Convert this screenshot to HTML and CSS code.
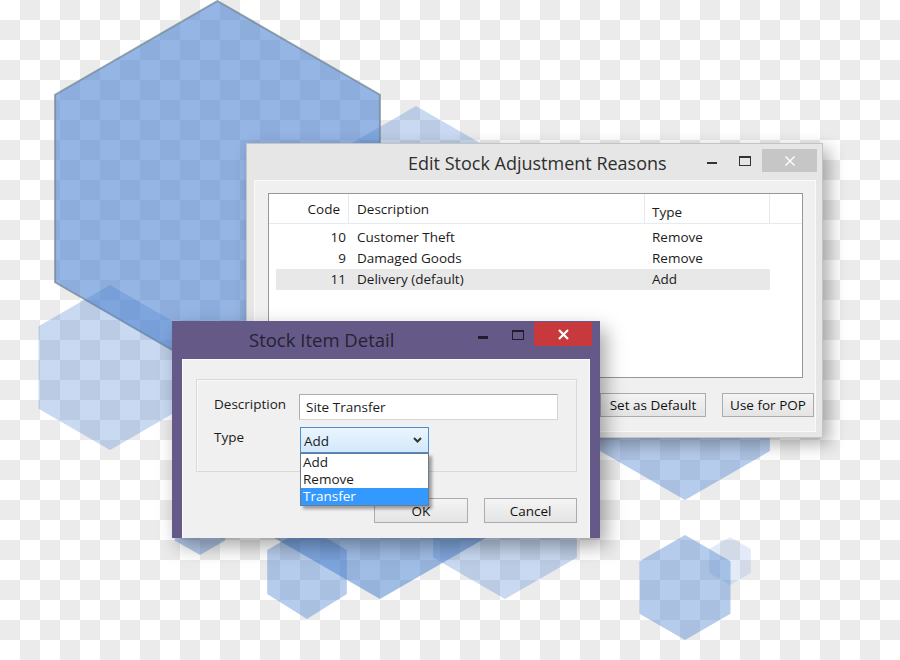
FILE: index.html
```html
<!DOCTYPE html>
<html lang="en">
<head>
    <meta charset="UTF-8">
    <meta name="viewport" content="width=device-width, initial-scale=1.0">
    <title>Stock Adjustment Reasons</title>
    <link rel="stylesheet" href="styles.css">
</head>
<body>
<div class="desk">
<!--  background hexagons  -->
  <svg class="hexes" width="900" height="660" viewBox="0 0 900 660">
    <polygon class="hex-light" points="416,106 511.3,161 511.3,271 416,326 320.7,271 320.7,161"/>
    <polygon class="hex-big" points="217.5,1 379.9,94.75 379.9,282.25 217.5,376 55.1,282.25 55.1,94.75"/>
    <polygon class="hex-light" points="110,285 181.4,326.25 181.4,408.75 110,450 38.6,408.75 38.6,326.25"/>
    <polygon class="hex-mid" points="200,497 225.1,511.5 225.1,540.5 200,555 174.9,540.5 174.9,511.5"/>
    <polygon class="hex-dark" points="380,319 501.2,389 501.2,529 380,599 258.8,529 258.8,389"/>
    <polygon class="hex-mid" points="307,527 346.8,550 346.8,594 307,619 267.2,594 267.2,550"/>
    <polygon class="hex-light" points="505,433 576.9,474.5 576.9,557.5 505,599 433.1,557.5 433.1,474.5"/>
    <polygon class="hex-mid" points="685,304 769.9,353 769.9,451 685,500 600.1,451 600.1,353"/>
    <polygon class="hex-mid" points="685,535 730.5,561.25 730.5,613.75 685,640 639.5,613.75 639.5,561.25"/>
    <polygon class="hex-faint" points="730,537 750.8,549 750.8,573 730,585 709.2,573 709.2,549"/>
  </svg>

<!--  edit stock adjustment reasons window  -->
  <div class="win reasons">
    <div class="titlebar">
      <span class="title">Edit Stock Adjustment Reasons</span>
      <span class="ctl-min"></span>
      <span class="ctl-max"></span>
      <span class="ctl-close">
        <svg width="10" height="10" viewBox="0 0 10 10"><path d="M0.5 0.5 L9.5 9.5 M9.5 0.5 L0.5 9.5" stroke="#fff" stroke-width="1.4"/></svg>
      </span>
    </div>
    <div class="client">
      <div class="listview">
        <div class="lv-head">
          <span class="c-code">Code</span>
          <span class="c-desc">Description</span>
          <span class="c-type">Type</span>
        </div>
        <div class="lv-body">
          <div class="lv-row"><span class="c-code">10</span><span class="c-desc">Customer Theft</span><span class="c-type">Remove</span></div>
          <div class="lv-row"><span class="c-code">9</span><span class="c-desc">Damaged Goods</span><span class="c-type">Remove</span></div>
          <div class="lv-row selected"><span class="c-code">11</span><span class="c-desc">Delivery (default)</span><span class="c-type">Add</span></div>
        </div>
      </div>
      <div class="btn-row">
        <span class="btn btn-default">Set as Default</span>
        <span class="btn btn-pop">Use for POP</span>
      </div>
    </div>
  </div>

<!--  stock item detail window  -->
  <div class="win detail">
    <div class="titlebar">
      <span class="title">Stock Item Detail</span>
      <span class="ctl-min"></span>
      <span class="ctl-max"></span>
      <span class="ctl-close">
        <svg width="11" height="11" viewBox="0 0 11 11"><path d="M1 1 L10 10 M10 1 L1 10" stroke="#fff" stroke-width="2.2"/></svg>
      </span>
    </div>
    <div class="client">
      <div class="group">
        <span class="label">Description</span>
        <div class="textbox">Site Transfer</div>
        <span class="label">Type</span>
        <div class="combo">
          <div class="combo-box">
            <span>Add</span>
            <svg class="chevron" width="9" height="6" viewBox="0 0 9 6"><path d="M1 1 L4.5 4.5 L8 1" fill="none" stroke="#333" stroke-width="2"/></svg>
          </div>
          <div class="combo-list">
            <div class="item">Add</div>
            <div class="item">Remove</div>
            <div class="item active">Transfer</div>
          </div>
        </div>
      </div>
      <div class="btn-row">
        <span class="btn btn-ok">OK</span>
        <span class="btn btn-cancel">Cancel</span>
      </div>
    </div>
  </div>
</div>
</body>
</html>
```

FILE: styles.css
```css
body {
margin:0;
padding:0;
font-family: "Open Sans", "Noto Sans", sans-serif;
color:#1b1b1b;
}

/* transparent checkerboard backdrop */
.desk {
position:relative;
width:900px;
height:660px;
overflow:hidden;
background-color:#fff;
background-image:conic-gradient(#ebebeb 0 25%, #fff 0 50%, #ebebeb 0 75%, #fff 0);
background-size:40px 40px;
}

.hexes {
position:absolute;
left:0;
top:0;
}
.hex-big {
fill:rgba(72,128,208,0.58);
stroke:rgba(115,135,150,0.75);
stroke-width:2;
}
.hex-dark { fill:rgba(72,128,208,0.52); }
.hex-mid { fill:rgba(72,128,208,0.4); }
.hex-light { fill:rgba(72,128,208,0.3); }
.hex-faint { fill:rgba(72,128,208,0.16); }

/* shared window chrome */
.win {
position:absolute;
box-sizing:border-box;
display:flex;
flex-direction:column;
}
.titlebar {
display:flex;
align-items:flex-start;
flex:none;
}
.title {
line-height:24px;
white-space:nowrap;
}
.ctl-min {
margin-left:auto;
width:10px;
height:2px;
}
.ctl-max {
box-sizing:border-box;
width:12px;
height:10px;
border:1px solid;
border-top-width:2px;
}
.ctl-close {
display:flex;
align-items:center;
justify-content:center;
}
.client {
flex:1;
box-sizing:border-box;
background:#f0f0f0;
}
.btn-row {
display:flex;
justify-content:flex-end;
gap:16px;
}
.btn {
box-sizing:border-box;
display:flex;
align-items:center;
justify-content:center;
background:linear-gradient(#f4f4f4, #e4e4e4);
border:1px solid #acacac;
font-size:13.5px;
color:#111;
}

/* edit stock adjustment reasons */
.reasons {
left:246px;
top:143px;
width:577px;
height:295px;
background:#e6e6e6;
border:1px solid #c4c4c4;
box-shadow:6px 6px 16px rgba(0,0,0,0.32);
}
.reasons .titlebar { height:36px; }
.reasons .title {
margin:7px 0 0 161px;
font-size:18px;
color:#2e2e2e;
}
.reasons .ctl-min {
margin-top:18px;
background:#333;
}
.reasons .ctl-max {
margin:12px 0 0 22px;
border-color:#333;
}
.reasons .ctl-close {
margin:5px 5px 0 11px;
width:55px;
height:23px;
background:#c6c6c6;
}
.reasons .client {
margin:0 6px 5px 7px;
border:1px solid #fafafa;
padding:12px 1px 0 13px;
}

.listview {
box-sizing:border-box;
width:535px;
height:185px;
background:#fff;
border:1px solid #979797;
font-size:13.5px;
}
.lv-head {
display:flex;
height:29px;
border-bottom:1px solid #e3ebf3;
}
.lv-head span {
box-sizing:border-box;
border-right:1px solid #e8e8e8;
line-height:30px;
}
.lv-head .c-code {
width:80px;
text-align:right;
padding-right:8px;
}
.lv-head .c-desc {
width:296px;
padding-left:8px;
}
.lv-head .c-type {
width:125px;
padding:3px 0 0 7px;
}
.lv-body { padding-top:3px; }
.lv-row {
display:flex;
margin-left:7px;
width:494px;
height:21px;
line-height:21px;
}
.lv-row.selected { background:#e8e8e8; }
.lv-row span { box-sizing:border-box; }
.lv-row .c-code {
width:73px;
text-align:right;
padding-right:3px;
}
.lv-row .c-desc {
width:296px;
padding-left:8px;
}
.lv-row .c-type {
width:125px;
padding-left:7px;
}
.reasons .btn-row { margin-top:15px; }
.reasons .btn { height:24px; }
.btn-default { width:106px; }
.btn-pop { width:92px; }

/* stock item detail */
.detail {
left:172px;
top:321px;
width:428px;
height:217px;
background:#655a87;
box-shadow:6px 8px 18px rgba(0,0,0,0.35);
}
.detail .titlebar { height:38px; }
.detail .title {
margin:7px 0 0 77px;
font-size:18.5px;
color:#262233;
}
.detail .ctl-min {
margin-top:15px;
height:3px;
background:#1e1e28;
}
.detail .ctl-max {
margin:9px 0 0 24px;
border-color:#1e1e28;
}
.detail .ctl-close {
margin:1px 8px 0 10px;
width:58px;
height:24px;
background:#c8393e;
}
.detail .client {
margin:0 10px;
border:1px solid #fbfbfb;
border-bottom:none;
padding:19px 12px 0 13px;
}
.group {
box-sizing:border-box;
height:93px;
border:1px solid #d9d9d9;
box-shadow:inset 1px 1px 0 #fafafa;
padding:14px 0 0 17px;
display:grid;
grid-template-columns:85px auto;
align-content:start;
row-gap:7px;
align-items:start;
font-size:13.5px;
}
.label { line-height:20px; }
.textbox {
box-sizing:border-box;
width:259px;
height:26px;
background:#fff;
border:1px solid #adadad;
border-right-color:#d4d4d4;
border-bottom-color:#d4d4d4;
padding-left:6px;
line-height:24px;
}
.combo {
position:relative;
width:129px;
margin-left:1px;
}
.combo-box {
box-sizing:border-box;
height:26px;
display:flex;
align-items:center;
justify-content:space-between;
padding:2px 6px 0 3px;
background:linear-gradient(#eaf5fe, #d3e8fb);
border:1px solid #4d8ed0;
}
.chevron { margin-top:-2px; }

/* open dropdown list lies over the buttons */
.combo-list {
position:absolute;
left:0;
top:100%;
z-index:2;
box-sizing:border-box;
width:129px;
background:#fff;
border:1px solid #6f7b8a;
box-shadow:3px 3px 3px rgba(0,0,0,0.35);
}
.item {
height:17px;
line-height:17px;
padding-left:2px;
}
.item.active {
background:#3399ff;
color:#fff;
}
.detail .btn-row { margin-top:26px; }
.detail .btn { height:25px; }
.btn-ok { width:94px; }
.btn-cancel { width:93px; }
```
